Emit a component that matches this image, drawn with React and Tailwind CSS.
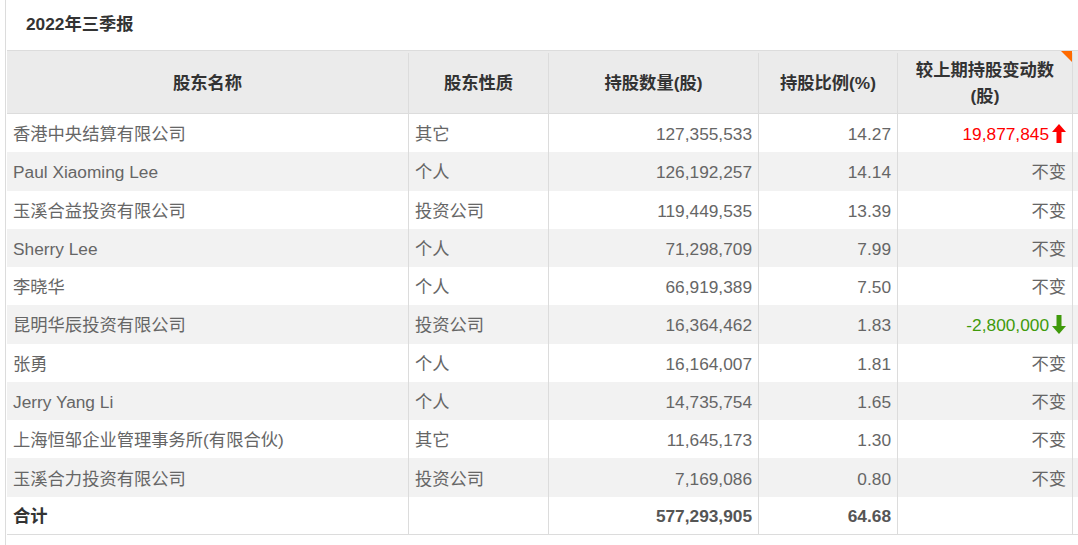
import React from "react";

const rows = [
  ["香港中央结算有限公司", "其它", "127,355,533", "14.27", { t: "19,877,845", up: true }],
  ["Paul Xiaoming Lee", "个人", "126,192,257", "14.14", "不变"],
  ["玉溪合益投资有限公司", "投资公司", "119,449,535", "13.39", "不变"],
  ["Sherry Lee", "个人", "71,298,709", "7.99", "不变"],
  ["李晓华", "个人", "66,919,389", "7.50", "不变"],
  ["昆明华辰投资有限公司", "投资公司", "16,364,462", "1.83", { t: "-2,800,000", up: false }],
  ["张勇", "个人", "16,164,007", "1.81", "不变"],
  ["Jerry Yang Li", "个人", "14,735,754", "1.65", "不变"],
  ["上海恒邹企业管理事务所(有限合伙)", "其它", "11,645,173", "1.30", "不变"],
  ["玉溪合力投资有限公司", "投资公司", "7,169,086", "0.80", "不变"],
];

function UpArrow() {
  return (
    <svg width="14" height="19" viewBox="0 0 14 19" className="ml-[3px] mb-[4px]">
      <path d="M7 0 L14 8 L9.5 8 L9.5 19 L4.5 19 L4.5 8 L0 8 Z" fill="#ff0000" />
    </svg>
  );
}
function DownArrow() {
  return (
    <svg width="14" height="19" viewBox="0 0 14 19" className="ml-[3px] mb-[4px]">
      <path d="M7 19 L14 11 L9.5 11 L9.5 0 L4.5 0 L4.5 11 L0 11 Z" fill="#3f9a0b" />
    </svg>
  );
}

const font = { fontFamily: '"Liberation Sans", "Noto Sans CJK SC", sans-serif' };

export default function App() {
  return (
    <div className="w-[1078px] h-[545px] overflow-hidden bg-white" style={font}>
      <div className="ml-[5px] h-full border-l border-[#dcdcdc] pl-[1px] text-[17.3px]">
        <div className="h-[50px] flex items-center pl-[19px] font-bold text-[#333]">2022年三季报</div>
        <div className="w-[1300px]">
          {/* header */}
          <div className="flex h-[64px] pt-[2px] bg-[#ebebeb] border-t border-b border-[#dcdcdc] font-bold text-[#333] leading-[26px]">
            <div className="w-[402px] border-r border-[#dcdcdc] flex items-center justify-center">股东名称</div>
            <div className="w-[140px] border-r border-[#dcdcdc] flex items-center justify-center">股东性质</div>
            <div className="w-[210px] border-r border-[#dcdcdc] flex items-center justify-center">持股数量(股)</div>
            <div className="w-[139px] border-r border-[#dcdcdc] flex items-center justify-center">持股比例(%)</div>
            <div className="relative w-[175px] border-r border-[#dcdcdc] flex flex-col items-center justify-center">
              <span>较上期持股变动数</span>
              <span>(股)</span>
              <div className="absolute top-[-2px] right-0 w-0 h-0 border-l-[11px] border-l-transparent border-t-[11px] border-t-[#ff6a00]" />
            </div>
            <div className="flex-1" />
          </div>
          {rows.map((r, i) => (
            <div
              key={i}
              className={`flex h-[38.27px] text-[#666] ${i % 2 === 1 ? "bg-[#f2f2f2]" : "bg-white"}`}
            >
              <div className="w-[402px] border-r border-[#dcdcdc] flex items-center px-[6px] pt-[4px] whitespace-nowrap">{r[0]}</div>
              <div className="w-[140px] border-r border-[#dcdcdc] flex items-center px-[6px] pt-[4px]">{r[1]}</div>
              <div className="w-[210px] border-r border-[#dcdcdc] flex items-center justify-end px-[6px] pt-[4px]">{r[2]}</div>
              <div className="w-[139px] border-r border-[#dcdcdc] flex items-center justify-end px-[6px] pt-[4px]">{r[3]}</div>
              <div className="w-[175px] border-r border-[#dcdcdc] flex items-center justify-end px-[6px] pt-[4px]">
                {typeof r[4] === "string" ? (
                  r[4]
                ) : r[4].up ? (
                  <>
                    <span className="text-[#ff0000]">{r[4].t}</span>
                    <UpArrow />
                  </>
                ) : (
                  <>
                    <span className="text-[#3f9a0b]">{r[4].t}</span>
                    <DownArrow />
                  </>
                )}
              </div>
              <div className="flex-1" />
            </div>
          ))}
          <div className="flex h-[38.27px] text-[#555] font-bold bg-white border-b border-[#dcdcdc]">
            <div className="w-[402px] border-r border-[#dcdcdc] flex items-center px-[6px] pt-[4px] text-[#333]">合计</div>
            <div className="w-[140px] border-r border-[#dcdcdc]" />
            <div className="w-[210px] border-r border-[#dcdcdc] flex items-center justify-end px-[6px] pt-[4px]">577,293,905</div>
            <div className="w-[139px] border-r border-[#dcdcdc] flex items-center justify-end px-[6px] pt-[4px]">64.68</div>
            <div className="w-[175px] border-r border-[#dcdcdc]" />
            <div className="flex-1" />
          </div>
        </div>
      </div>
    </div>
  );
}
